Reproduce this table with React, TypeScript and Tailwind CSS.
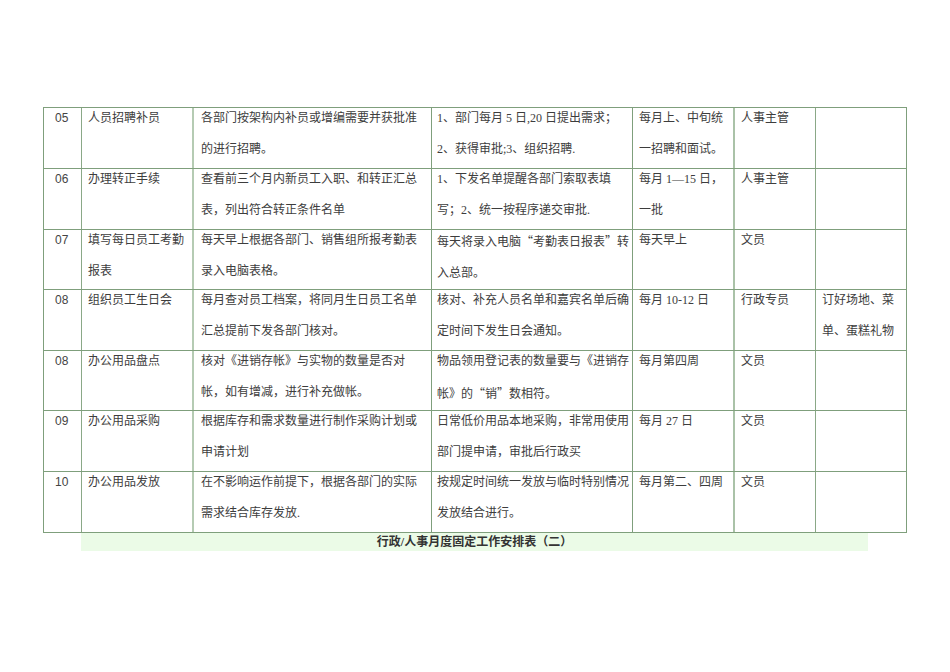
const font = {
  fontFamily: '"Liberation Serif", "Noto Sans CJK SC", serif',
};

type Row = {
  no: string;
  item: string[];
  content: string[];
  standard: string[];
  time: string[];
  owner: string;
  note: string[];
  h: string;
};

const rows: Row[] = [
  {
    no: "05",
    item: ["人员招聘补员"],
    content: ["各部门按架构内补员或增编需要并获批准", "的进行招聘。"],
    standard: ["1、部门每月 5 日,20 日提出需求；", "2、获得审批;3、组织招聘."],
    time: ["每月上、中旬统", "一招聘和面试。"],
    owner: "人事主管",
    note: [],
    h: "h-[61px]",
  },
  {
    no: "06",
    item: ["办理转正手续"],
    content: ["查看前三个月内新员工入职、和转正汇总", "表，列出符合转正条件名单"],
    standard: ["1、下发名单提醒各部门索取表填", "写；2、统一按程序递交审批."],
    time: ["每月 1—15 日，", "一批"],
    owner: "人事主管",
    note: [],
    h: "h-[61px]",
  },
  {
    no: "07",
    item: ["填写每日员工考勤", "报表"],
    content: ["每天早上根据各部门、销售组所报考勤表", "录入电脑表格。"],
    standard: ["每天将录入电脑“考勤表日报表”转", "入总部。"],
    time: ["每天早上"],
    owner: "文员",
    note: [],
    h: "h-[60px]",
  },
  {
    no: "08",
    item: ["组织员工生日会"],
    content: ["每月查对员工档案，将同月生日员工名单", "汇总提前下发各部门核对。"],
    standard: ["核对、补充人员名单和嘉宾名单后确", "定时间下发生日会通知。"],
    time: ["每月 10-12 日"],
    owner: "行政专员",
    note: ["订好场地、菜", "单、蛋糕礼物"],
    h: "h-[61px]",
  },
  {
    no: "08",
    item: ["办公用品盘点"],
    content: ["核对《进销存帐》与实物的数量是否对", "帐，如有增减，进行补充做帐。"],
    standard: ["物品领用登记表的数量要与《进销存", "帐》的“销”数相符。"],
    time: ["每月第四周"],
    owner: "文员",
    note: [],
    h: "h-[60px]",
  },
  {
    no: "09",
    item: ["办公用品采购"],
    content: ["根据库存和需求数量进行制作采购计划或", "申请计划"],
    standard: ["日常低价用品本地采购，非常用使用", "部门提申请，审批后行政买"],
    time: ["每月 27 日"],
    owner: "文员",
    note: [],
    h: "h-[61px]",
  },
  {
    no: "10",
    item: ["办公用品发放"],
    content: ["在不影响运作前提下，根据各部门的实际", "需求结合库存发放."],
    standard: ["按规定时间统一发放与临时特别情况", "发放结合进行。"],
    time: ["每月第二、四周"],
    owner: "文员",
    note: [],
    h: "h-[61px]",
  },
];

// curly quotes need the CJK font to come out full width
const Text = ({ s }: { s: string }) => (
  <>
    {s.split(/([“”])/).map((part, i) =>
      part === "“" || part === "”" ? (
        <span key={i} className="font-['Noto_Sans_CJK_SC']">
          {part}
        </span>
      ) : (
        part
      )
    )}
  </>
);

const Lines = ({ lines }: { lines: string[] }) => (
  <div className="-mt-[6px] leading-[31px] whitespace-nowrap">
    {lines.map((l, i) => (
      <div key={i}>
        <Text s={l} />
      </div>
    ))}
  </div>
);

export default function App() {
  return (
    <div
      className="w-[950px] h-[672px] bg-white pt-[107px] pl-[43px] text-[12px] text-[#3d3d3d]"
      style={font}
    >
      <div className="w-[864px] border-t border-l border-[#7f9f7c]">
        {rows.map((r, i) => (
          <div key={i} className={`flex border-b border-[#7f9f7c] ${r.h}`}>
            <div className="w-[38px] shrink-0 border-r border-[#8aa887] pl-[11px] pt-[1px] font-['Liberation_Sans'] text-[#444]">
              <Lines lines={[r.no]} />
            </div>
            <div className="w-[112px] shrink-0 border-r-2 border-[#b5cbb3] pl-[6px] pt-[1px]">
              <Lines lines={r.item} />
            </div>
            <div className="w-[238px] shrink-0 border-r border-[#7f9f7c] pl-[7px] pt-[1px]">
              <Lines lines={r.content} />
            </div>
            <div className="w-[201px] shrink-0 border-r border-[#7f9f7c] pl-[5px] pt-[1px]">
              <Lines lines={r.standard} />
            </div>
            <div className="w-[102px] shrink-0 border-r-2 border-[#aac2a8] pl-[6px] pt-[1px]">
              <Lines lines={r.time} />
            </div>
            <div className="w-[81px] shrink-0 border-r border-[#8aa887] pl-[6px] pt-[1px]">
              <Lines lines={[r.owner]} />
            </div>
            <div className="w-[91px] shrink-0 border-r border-[#7f9f7c] pl-[6px] pt-[1px]">
              <Lines lines={r.note} />
            </div>
          </div>
        ))}
      </div>
      <div className="ml-[38px] w-[787px] h-[18px] bg-[#ebfbe7] flex items-center justify-center font-bold text-[12px] text-[#333]">
        行政/人事月度固定工作安排表（二）
      </div>
    </div>
  );
}
